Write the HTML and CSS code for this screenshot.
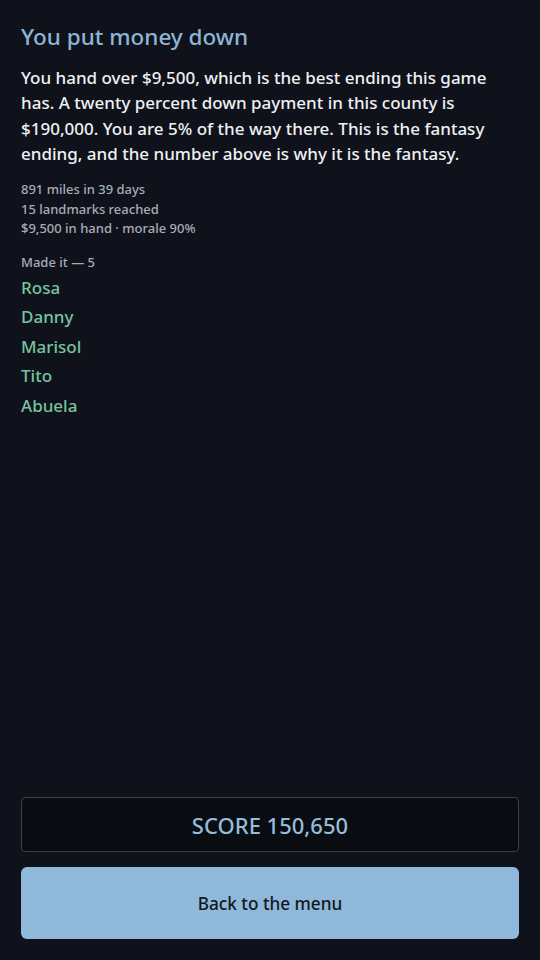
FILE: index.html
```html
<!DOCTYPE html>
<html>
<head>
    <title>The End</title>
    <meta name="viewport" content="width=device-width, initial-scale=1.0">
    <link rel="stylesheet" href="styles.css">
</head>
<body>
    <div class="screen">
        <div class="ending">
            <h1 class="ending-title">You put money down</h1>
            <p class="ending-text">You hand over $9,500, which is the best ending this game has. A twenty percent down payment in this county is $190,000. You are 5% of the way there. This is the fantasy ending, and the number above is why it is the fantasy.</p>

            <div class="stats">
                <div>891 miles in 39 days</div>
                <div>15 landmarks reached</div>
                <div>$9,500 in hand · morale 90%</div>
            </div>

            <div class="party">
                <div class="party-label">Made it — 5</div>
                <ul class="party-list">
                    <li>Rosa</li>
                    <li>Danny</li>
                    <li>Marisol</li>
                    <li>Tito</li>
                    <li>Abuela</li>
                </ul>
            </div>
        </div>

        <div class="actions">
            <div class="score">SCORE 150,650</div>
            <button class="menu-btn">Back to the menu</button>
        </div>
    </div>
</body>
</html>
```

FILE: styles.css
```css
/* base */
* {
    box-sizing: border-box;
}

body {
    margin: 0;
    background: #0f121a;
    color: #e6e9ee;
    font-family: 'Noto Sans', 'Open Sans', sans-serif;
}

.screen {
    min-height: 100vh;
    padding: 21px;
    display: flex;
    flex-direction: column;
}

/* ending text */
.ending {
    flex: 1;
}

.ending-title {
    margin: 0 0 12px;
    font-size: 22.5px;
    font-weight: 500;
    color: #8db5d6;
    line-height: 32px;
}

.ending-text {
    margin: 0 0 14px;
    font-size: 17px;
    font-weight: 500;
    line-height: 25.3px;
    color: #eef0f3;
}

.stats {
    font-size: 13px;
    font-weight: 500;
    line-height: 19.5px;
    color: #a6adb8;
    margin-bottom: 13px;
}

.party-label {
    font-size: 13px;
    font-weight: 500;
    color: #a6adb8;
    line-height: 20px;
    margin-bottom: 1px;
}

.party-list {
    list-style: none;
    margin: 0;
    padding: 0;
}

.party-list li {
    font-size: 17px;
    font-weight: 500;
    line-height: 29.5px;
    color: #77c2a0;
}

/* bottom */
.actions {
    display: flex;
    flex-direction: column;
    gap: 15px;
}

.score {
    height: 55px;
    display: flex;
    align-items: center;
    justify-content: center;
    background: #090c11;
    border: 1px solid #3a404b;
    border-radius: 4px;
    font-size: 22px;
    font-weight: 500;
    color: #95bcdb;
}

.menu-btn {
    height: 72px;
    border: none;
    border-radius: 6px;
    background: #8fb8da;
    color: #121820;
    font-family: inherit;
    font-size: 17.2px;
    font-weight: 500;
    cursor: pointer;
}
```
